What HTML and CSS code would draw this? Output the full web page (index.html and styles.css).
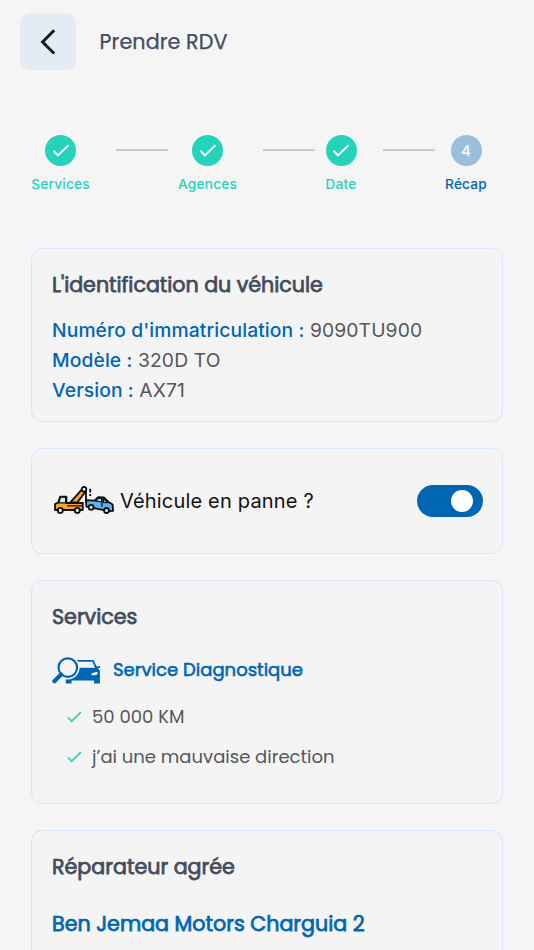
FILE: index.html
```html
<!DOCTYPE html>
<html lang="fr">
<head>
<meta charset="utf-8">
<meta name="viewport" content="width=device-width, initial-scale=1">
<title>Prendre RDV</title>
<link rel="stylesheet" href="styles.css">
</head>
<body>
<header class="header">
  <button class="back" aria-label="Retour"><svg width="18" height="28" viewBox="0 0 18 28"><path d="M15.2 2.2 3.6 14l11.6 11.5" fill="none" stroke="#181a1e" stroke-width="3"/></svg></button>
  <h1 class="title">Prendre RDV</h1>
</header>
<ol class="stepper">
  <li class="step"><span class="dot"><svg class="tick" viewBox="0 0 17 13"><path d="M1 6.8 5.4 11.4 16 1.2"/></svg></span><span class="label">Services</span></li>
  <li class="line"></li>
  <li class="step"><span class="dot"><svg class="tick" viewBox="0 0 17 13"><path d="M1 6.8 5.4 11.4 16 1.2"/></svg></span><span class="label">Agences</span></li>
  <li class="line"></li>
  <li class="step"><span class="dot"><svg class="tick" viewBox="0 0 17 13"><path d="M1 6.8 5.4 11.4 16 1.2"/></svg></span><span class="label date">Date</span></li>
  <li class="line"></li>
  <li class="step current"><span class="dot">4</span><span class="label recap">Récap</span></li>
</ol>
<main class="cards">
  <section class="card vehicle">
    <h2 class="heading">L'identification du véhicule</h2>
    <dl class="specs">
      <div><dt>Numéro d'immatriculation :</dt> <dd>9090TU900</dd></div>
      <div><dt>Modèle :</dt> <dd>320D TO</dd></div>
      <div><dt>Version :</dt> <dd>AX71</dd></div>
    </dl>
  </section>
  <section class="card breakdown">
    <svg class="tow" width="62" height="28" viewBox="0 0 62 28" stroke="#0b0d10" stroke-width="1.8" stroke-linejoin="round">
      <path d="M17.5 16.2 29 3.4 32.2 6 24.4 16.4z" fill="#f9a526"/>
      <path d="M2 24v-6l3.2-1.5L7.2 10.6H13.4v6.4H29.8V24z" fill="#f9a526"/>
      <path d="M5.8 16.9 7.5 11.2h5.1v5.7z" fill="#c9ecf7" stroke-width="1.2"/>
      <path d="M14 19.8h15.5" fill="none" stroke-width="1.2"/>
      <circle cx="31" cy="3.3" r="2.3" fill="#fff"/>
      <path d="M33 5v12" fill="none"/>
      <path d="M37.2 2.7v3.7M37.2 8v2" fill="none"/>
      <path d="M33 14.1 41.4 14.6 45.2 11.2 50.8 11.5 55.5 16 59.6 18.6 60.1 24.8 56 25.2 33.4 20.6z" fill="#5ab2ee"/>
      <path d="M42.2 14.8 45.5 12.2 48.4 12.3 48.7 16zM50.3 12.5 54.5 16.6 50.4 16.4z" fill="#b7e0f7" stroke-width="1.2"/>
      <path d="M48.9 12v8.8" fill="none" stroke-width="1.2"/>
      <circle cx="7.3" cy="24.4" r="2.5" fill="#e8edf0"/><circle cx="24.3" cy="24.4" r="2.5" fill="#e8edf0"/>
      <circle cx="38.1" cy="21.3" r="2.5" fill="#e8edf0"/><circle cx="53.5" cy="24.5" r="2.5" fill="#e8edf0"/>
    </svg>
    <span class="question">Véhicule en panne ?</span>
    <span class="switch" role="switch" aria-checked="true"><i class="knob"></i></span>
  </section>
  <section class="card services">
    <h2 class="heading">Services</h2>
    <div class="service">
      <svg width="49" height="27" viewBox="0 0 49 27">
        <path d="M14 3H40.2Q41.8 3 42.3 4.4L44.5 9.2h3.6v1.9h-2.3l2.1 3V26.4h-5.8v-2.8H19.6v2.8h-5.8v-7.9L17 11z" fill="#0066b4"/>
        <path d="M24 4.8H39.6q1 0 1.3.9l2 5H24z" fill="#f4f4f4"/>
        <circle cx="15.8" cy="10.6" r="11.8" fill="#f4f4f4"/>
        <circle cx="15.8" cy="10.6" r="9.3" fill="#f4f4f4" stroke="#0066b4" stroke-width="2.2"/>
        <path d="M9.1 17.4 2.4 24.2" stroke="#0066b4" stroke-width="4.2" stroke-linecap="round"/>
        <path d="M39.3 16.7q3.2-2 6.3-1.7v1.2q-.4 2.4-4.9 2.1-1.7-.1-1.4-1.6z" fill="#f4f4f4"/>
      </svg>
      <h3 class="service-name">Service Diagnostique</h3>
    </div>
    <ul class="tasks">
      <li><svg class="check" width="15" height="12" viewBox="0 0 15 12"><path d="M1 6.5 4.7 10.2 13.8 1.2"/></svg><span class="task">50 000 KM</span></li>
      <li><svg class="check" width="15" height="12" viewBox="0 0 15 12"><path d="M1 6.5 4.7 10.2 13.8 1.2"/></svg><span class="task">j’ai une mauvaise direction</span></li>
    </ul>
  </section>
  <section class="card garage">
    <h2 class="heading">Réparateur agrée</h2>
    <p class="garage-name">Ben Jemaa Motors Charguia 2</p>
  </section>
</main>
</body>
</html>
```
FILE: styles.css
```css
* { box-sizing: border-box; margin: 0; padding: 0; }
body { background: #f5f5f5; font-family: Poppins, Inter, sans-serif; color: #434c5c; }
ul, ol { list-style: none; }

.header { display: flex; align-items: center; padding: 13px 20px 0; height: 70px; }
.back { display: flex; align-items: center; justify-content: center; width: 56px; height: 57px; border: 0; border-radius: 11px; background: #e3ebf4; }
.title { margin: 1px 0 0 23.5px; font-size: 20.7px; font-weight: 400; line-height: 30px; -webkit-text-stroke: .25px; letter-spacing: .1px; white-space: nowrap; }

.stepper { display: flex; height: 178px; padding: 64px 0 0 31px; }
.step { display: flex; flex-direction: column; align-items: center; flex: none; color: #25d3bb; }
.dot { display: flex; align-items: center; justify-content: center; width: 31px; height: 31px; margin-top: .5px; border-radius: 50%; background: #25d3bb; color: #fff; font: 500 15px/31px Inter, sans-serif; }
.tick { width: 18px; height: 13px; fill: none; stroke: #fff; stroke-width: 2; }
.label { width: 59px; margin-top: 8.5px; text-align: center; font: 500 13.7px/20px Inter, sans-serif; letter-spacing: .2px; white-space: nowrap; }
.date { width: 32px; }
.recap { width: 42px; }
.line { flex: none; width: 52px; height: 2px; margin: 15px 10px 0 26px; background: #cacaca; }
.current { color: #0066b4; }
.current .dot { background: #99bfdd; }

.cards { display: flex; flex-direction: column; gap: 26px; padding: 0 31px; }
.card { flex: none; border: 1.5px solid #d8e6fe; border-radius: 11px; background: #f4f4f4; padding: 0 20px; }
.heading { font-size: 20.65px; font-weight: 400; line-height: 32px; -webkit-text-stroke: .75px; white-space: nowrap; }
.vehicle { height: 174px; padding-top: 20px; }
.vehicle .heading { letter-spacing: -.03px; }
.specs { margin-top: 15px; font: 400 19.3px/29.8px Inter, sans-serif; color: #55565c; letter-spacing: .1px; white-space: nowrap; }
.specs dt { display: inline; color: #0066b4; font-weight: 500; }
.specs dd { display: inline; }

.breakdown { display: flex; align-items: center; height: 106px; }
.tow { flex: none; margin: -3px 5px 0 1px; }
.question { font: 400 20px/30px Inter, sans-serif; color: #111; letter-spacing: .18px; white-space: nowrap; }
.switch { display: flex; align-items: center; justify-content: flex-end; width: 66px; height: 32px; margin-left: auto; margin-right: -.5px; padding-right: 10px; border-radius: 16px; background: #0066b4; }
.knob { width: 22px; height: 22px; border-radius: 50%; background: #fff; }

.services { height: 224px; padding-top: 20px; }
.service { display: flex; align-items: center; gap: 12px; height: 28px; margin-top: 23px; }
.service-name { font-size: 18px; font-weight: 400; line-height: 28px; color: #0066b4; -webkit-text-stroke: .6px; letter-spacing: .02px; white-space: nowrap; }
.tasks { margin: 12px 0 0 15px; font-size: 18px; color: #55565c; }
.tasks li { display: flex; align-items: center; gap: 10px; height: 40px; white-space: nowrap; }
.check { margin-top: 2px; fill: none; stroke: #25d3bb; stroke-width: 1.7; }

.garage { height: 120px; padding-top: 20px; border-bottom: 0; border-radius: 11px 11px 0 0; }
.garage-name { margin-top: 25px; font-size: 20.65px; font-weight: 400; line-height: 32px; color: #0066b4; -webkit-text-stroke: .75px; white-space: nowrap; }
```
